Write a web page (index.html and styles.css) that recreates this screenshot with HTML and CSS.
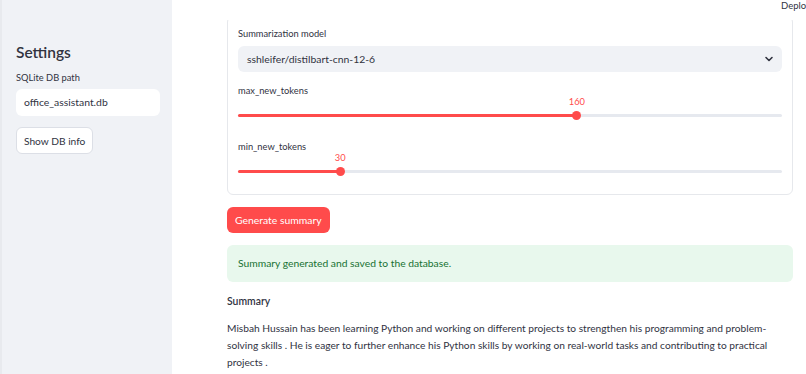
FILE: index.html
```html
<!DOCTYPE html>
<html lang="en">
<head>
    <meta charset="UTF-8">
    <meta name="viewport" content="width=device-width, initial-scale=1.0">
    <title>Office Assistant</title>
    <link rel="stylesheet" href="styles.css">
</head>
<body>
    <!-- Top bar (lies over the scrolled page) -->
    <div class="top-bar">
        <span class="deploy">Deploy</span>
    </div>

    <div class="app">
        <!-- Sidebar -->
        <aside class="sidebar">
            <h2 class="sidebar-title">Settings</h2>
            <label class="field-label" for="dbPath">SQLite DB path</label>
            <div class="text-input" id="dbPath">office_assistant.db</div>
            <button class="plain-button">Show DB info</button>
        </aside>

        <!-- Main content -->
        <main class="main">
            <div class="bordered-box">
                <label class="field-label">Summarization model</label>
                <div class="select-box">
                    <span>sshleifer/distilbart-cnn-12-6</span>
                    <svg class="chevron" width="10" height="10" viewBox="0 0 10 10">
                        <path d="M2 3.5 L5 6.5 L8 3.5" fill="none" stroke="#31333f" stroke-width="1.6" stroke-linecap="round" stroke-linejoin="round"/>
                    </svg>
                </div>

                <label class="field-label">max_new_tokens</label>
                <div class="slider gap-after">
                    <div class="track">
                        <div class="fill" style="width: 62.3%"></div>
                        <div class="thumb" style="left: 62.3%">
                            <span class="thumb-value">160</span>
                        </div>
                    </div>
                </div>

                <label class="field-label">min_new_tokens</label>
                <div class="slider">
                    <div class="track">
                        <div class="fill" style="width: 18.8%"></div>
                        <div class="thumb" style="left: 18.8%">
                            <span class="thumb-value">30</span>
                        </div>
                    </div>
                </div>
            </div>

            <button class="primary-button">Generate summary</button>

            <div class="success-box">Summary generated and saved to the database.</div>

            <h4 class="summary-title">Summary</h4>
            <p class="summary-text">Misbah Hussain has been learning Python and working on different projects to strengthen his programming and problem-solving skills . He is eager to further enhance his Python skills by working on real-world tasks and contributing to practical projects .</p>
        </main>
    </div>
</body>
</html>
```

FILE: styles.css
```css
body {
    font-family: "Lato", "Liberation Sans", sans-serif;
    color: #31333f;
    background: #ffffff;
    margin: 0;
    padding: 0;
    width: 806px;
    height: 374px;
    overflow: hidden;
}

.top-bar {
    position: absolute;
    top: 0;
    left: 172px;
    right: 0;
    height: 20px;
    background-color: #ffffff;
    overflow: hidden;
}

.deploy {
    position: absolute;
    top: 0;
    left: 609px;
    font-size: 9.5px;
    line-height: 11px;
    white-space: nowrap;
}

.app {
    display: flex;
    height: 374px;
}

.sidebar {
    width: 172px;
    flex-shrink: 0;
    background-color: #f0f2f6;
    border-left: 2px solid #e8eaee;
    padding: 42px 12px 0 14px;
    box-sizing: border-box;
    display: flex;
    flex-direction: column;
    align-items: flex-start;
}

.sidebar-title {
    font-size: 15.5px;
    font-weight: 600;
    line-height: 20px;
    margin: 0 0 9px 0;
}

.field-label {
    display: block;
    font-size: 9.3px;
    line-height: 14px;
}

.text-input {
    width: 144px;
    height: 27px;
    box-sizing: border-box;
    margin-top: 4px;
    padding: 0 8px;
    background-color: #ffffff;
    border-radius: 6px;
    font-size: 10.4px;
    line-height: 27px;
}

.plain-button {
    margin-top: 11px;
    height: 27px;
    padding: 0 7px;
    background-color: #ffffff;
    border: 1px solid #dcdfe6;
    border-radius: 6px;
    font-family: inherit;
    font-size: 10.2px;
    color: #31333f;
}

.main {
    width: 634px;
    min-width: 0;
    box-sizing: border-box;
    padding: 16px 13px 0 55px;
    display: flex;
    flex-direction: column;
    align-items: flex-start;
}

.bordered-box {
    width: 566px;
    box-sizing: border-box;
    border: 1px solid #e6e8ec;
    border-radius: 6px;
    padding: 10px 10px;
}

.select-box {
    margin: 5px 0 12px 0;
    height: 26px;
    background-color: #f0f2f6;
    border-radius: 6px;
    padding: 0 8px 0 9px;
    display: flex;
    align-items: center;
    justify-content: space-between;
    font-size: 10.4px;
}

.slider {
    height: 30px;
    position: relative;
}

.slider.gap-after {
    margin-bottom: 12px;
}

.track {
    position: absolute;
    left: 0;
    right: 0;
    top: 16px;
    height: 3px;
    border-radius: 2px;
    background-color: #e6e9ef;
}

.fill {
    height: 100%;
    border-radius: 2px;
    background-color: #ff4b4b;
}

.thumb {
    position: absolute;
    top: -3px;
    width: 9px;
    height: 9px;
    margin-left: -4.5px;
    border-radius: 50%;
    background-color: #ff4b4b;
}

.thumb-value {
    position: absolute;
    bottom: 12px;
    left: 50%;
    transform: translateX(-50%);
    font-size: 9.3px;
    line-height: 12px;
    color: #ff4b4b;
}

.primary-button {
    margin-top: 12px;
    height: 26px;
    padding: 0 8px;
    background-color: #ff4b4b;
    color: white;
    border: none;
    border-radius: 6px;
    font-family: inherit;
    font-size: 10.4px;
}

.success-box {
    margin-top: 12px;
    width: 566px;
    box-sizing: border-box;
    height: 37px;
    padding: 0 11px;
    background-color: #e8f8ed;
    border-radius: 6px;
    color: #177233;
    font-size: 10.3px;
    line-height: 37px;
}

.summary-title {
    margin: 11px 0 0 0;
    font-size: 10.4px;
    font-weight: 600;
    line-height: 16px;
}

.summary-text {
    width: 566px;
    margin: 11px 0 0 0;
    font-size: 10.2px;
    line-height: 17px;
}
```
